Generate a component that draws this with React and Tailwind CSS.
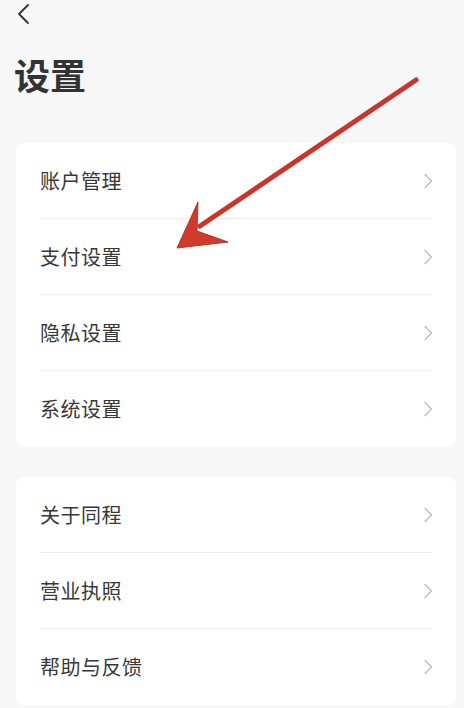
import React from "react";

const groups = [
  ["账户管理", "支付设置", "隐私设置", "系统设置"],
  ["关于同程", "营业执照", "帮助与反馈"],
];

const Chevron = () => (
  <svg className="w-[10px] h-[16px] text-[#bdbdbd]" viewBox="0 0 10 16" fill="none">
    <path d="M2 1.5L8.5 8L2 14.5" stroke="currentColor" strokeWidth="1.4" strokeLinecap="round" strokeLinejoin="round" />
  </svg>
);

const Row = ({ label, last }) => (
  <div className="h-[76px] flex flex-col">
    <div className="flex-1 flex items-center justify-between pl-[24px] pr-[23px]">
      <span className="text-[20px] text-[#383838] tracking-[0.5px]">{label}</span>
      <Chevron />
    </div>
    {!last && <div className="ml-[24px] mr-[24px] h-px bg-[#ececec]"></div>}
  </div>
);

export default function App() {
  return (
    <div
      className="relative w-[464px] h-[708px] bg-[#f7f7f7] overflow-hidden"
      style={{ fontFamily: '"Noto Sans CJK SC", "Noto Sans", sans-serif' }}
    >
      {/* Header */}
      <div className="h-[30px] pl-[16px] pt-[3px]">
        <svg className="w-[16px] h-[22px] text-[#333333]" viewBox="0 0 16 22" fill="none">
          <path d="M12 2L3 11L12 20" stroke="currentColor" strokeWidth="1.8" strokeLinecap="round" strokeLinejoin="round" />
        </svg>
      </div>
      <h1 className="pl-[14px] mt-[22px] text-[36px] leading-[44px] font-bold text-[#333333]">设置</h1>

      {/* Groups */}
      <div className="flex flex-col gap-[30px] pl-[16px] pr-[8px] mt-[47px]">
        {groups.map((items, gi) => (
          <div key={gi} className="bg-white rounded-[8px]">
            {items.map((label, i) => (
              <Row key={label} label={label} last={i === items.length - 1} />
            ))}
          </div>
        ))}
      </div>

      {/* Red annotation arrow */}
      <svg className="absolute left-0 top-0 w-[464px] h-[708px] pointer-events-none" viewBox="0 0 464 708" fill="none">
        <path d="M416 80L200 226" stroke="#c8362b" strokeWidth="5" strokeLinecap="round" />
        <path d="M177 248L198 202L197 231L228 242Z" fill="#d03a2c" stroke="#b8322a" strokeWidth="1" strokeLinejoin="round" />
      </svg>
    </div>
  );
}
